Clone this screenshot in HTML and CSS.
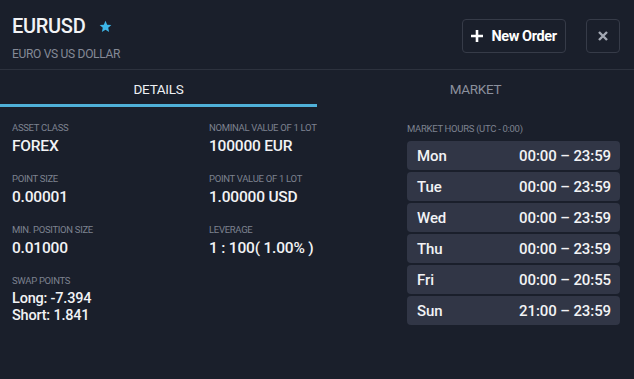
FILE: index.html
```html
<!DOCTYPE html>
<html lang="en">
<head>
  <meta charset="UTF-8">
  <meta name="viewport" content="width=device-width, initial-scale=1.0">
  <title>EURUSD</title>
  <link rel="stylesheet" href="styles.css">
</head>
<body>
  <div class="header">
    <div class="header__info">
      <div class="header__title">
        EURUSD
        <svg class="star" width="13" height="13" viewBox="0 0 24 24"><path d="M12 1.5l3.1 7.1 7.7.7-5.8 5.1 1.7 7.6L12 18l-6.7 4 1.7-7.6-5.8-5.1 7.7-.7z"/></svg>
      </div>
      <div class="header__subtitle">EURO VS US DOLLAR</div>
    </div>
    <div class="header__actions">
      <button class="button button__new">
        <svg width="12" height="12" viewBox="0 0 12 12"><path d="M6 0v12M0 6h12" stroke="#fff" stroke-width="2.6"/></svg>
        New Order
      </button>
      <button class="button button__close">
        <svg width="10" height="10" viewBox="0 0 10 10"><path d="M1 1l8 8M9 1l-8 8" stroke="#a3a8b3" stroke-width="2.4"/></svg>
      </button>
    </div>
  </div>

  <div class="tabs">
    <div class="tabs__item is-active">DETAILS</div>
    <div class="tabs__item">MARKET</div>
  </div>

  <div class="details">
    <div class="details__grid">
      <div class="field">
        <div class="field__label">ASSET CLASS</div>
        <div class="field__value">FOREX</div>
      </div>
      <div class="field">
        <div class="field__label">NOMINAL VALUE OF 1 LOT</div>
        <div class="field__value">100000 EUR</div>
      </div>
      <div class="field">
        <div class="field__label">POINT SIZE</div>
        <div class="field__value">0.00001</div>
      </div>
      <div class="field">
        <div class="field__label">POINT VALUE OF 1 LOT</div>
        <div class="field__value">1.00000 USD</div>
      </div>
      <div class="field">
        <div class="field__label">MIN. POSITION SIZE</div>
        <div class="field__value">0.01000</div>
      </div>
      <div class="field">
        <div class="field__label">LEVERAGE</div>
        <div class="field__value">1 : 100( 1.00% )</div>
      </div>
      <div class="field">
        <div class="field__label">SWAP POINTS</div>
        <div class="field__value field__value--list">Long: -7.394<br>Short: 1.841</div>
      </div>
    </div>

    <div class="hours">
      <div class="field__label">MARKET HOURS (UTC - 0:00)</div>
      <div class="hours__list">
        <div class="hours__row"><span>Mon</span><span>00:00 – 23:59</span></div>
        <div class="hours__row"><span>Tue</span><span>00:00 – 23:59</span></div>
        <div class="hours__row"><span>Wed</span><span>00:00 – 23:59</span></div>
        <div class="hours__row"><span>Thu</span><span>00:00 – 23:59</span></div>
        <div class="hours__row"><span>Fri</span><span>00:00 – 20:55</span></div>
        <div class="hours__row"><span>Sun</span><span>21:00 – 23:59</span></div>
      </div>
    </div>
  </div>
</body>
</html>
```

FILE: styles.css
```css
* {
  box-sizing: border-box;
}

html,
body {
  margin: 0;
  height: 100%;
  overflow: hidden;
}

body {
  background: #1a1f2b;
  color: #f2f3f5;
  font-family: Roboto, "Noto Sans", sans-serif;
}

.header {
  display: flex;
  justify-content: space-between;
  height: 70px;
  padding: 14px 14px 0 12px;
  border-bottom: 1px solid #2d323e;
}

.header__title {
  display: flex;
  align-items: center;
  gap: 14px;
  font-size: 20px;
  font-weight: 500;
  line-height: 24px;
  letter-spacing: -.3px;
}

.star {
  fill: #3db6e8;
}

.header__subtitle {
  margin-top: 9px;
  font-size: 12px;
  line-height: 14px;
  color: #858a97;
  letter-spacing: -.3px;
}

.header__actions {
  display: flex;
  gap: 20px;
  padding-top: 5px;
}

.button {
  appearance: none;
  -webkit-appearance: none;
  display: flex;
  align-items: center;
  justify-content: center;
  height: 34px;
  border: 1px solid #363b48;
  border-radius: 4px;
  background: transparent;
  color: #fff;
  font-family: inherit;
  cursor: pointer;
}

.button__new {
  gap: 8px;
  width: 104px;
  font-size: 14.5px;
  font-weight: 700;
  letter-spacing: -.4px;
}

.button__close {
  width: 34px;
}

.tabs {
  display: flex;
  height: 37px;
}

.tabs__item {
  flex: 1;
  padding-top: 11px;
  text-align: center;
  font-size: 13.5px;
  color: #8b909d;
  letter-spacing: -.3px;
  border-bottom: 3px solid transparent;
}

.tabs__item.is-active {
  color: #eef0f3;
  border-bottom-color: #4fb0d8;
}

.details {
  display: flex;
  justify-content: space-between;
  padding: 15px 14px 0 12px;
}

.details__grid {
  display: grid;
  grid-template-columns: 197px 197px;
  row-gap: 17px;
  align-content: start;
}

.field__label {
  font-size: 9.5px;
  line-height: 12px;
  color: #7d8290;
  letter-spacing: -.3px;
}

.field__value {
  margin-top: 2px;
  font-size: 15.5px;
  font-weight: 500;
  line-height: 20px;
  letter-spacing: -.2px;
}

.field__value--list {
  margin-top: 3px;
  font-size: 14.5px;
  line-height: 17px;
}

.hours {
  width: 213px;
  padding-top: 1px;
}

.hours__list {
  display: flex;
  flex-direction: column;
  gap: 2px;
  margin-top: 6px;
}

.hours__row {
  display: flex;
  justify-content: space-between;
  align-items: center;
  height: 29px;
  padding: 0 9px 0 10px;
  border-radius: 4px;
  background: #313646;
  font-size: 15px;
  font-weight: 500;
  letter-spacing: -.1px;
}
```
